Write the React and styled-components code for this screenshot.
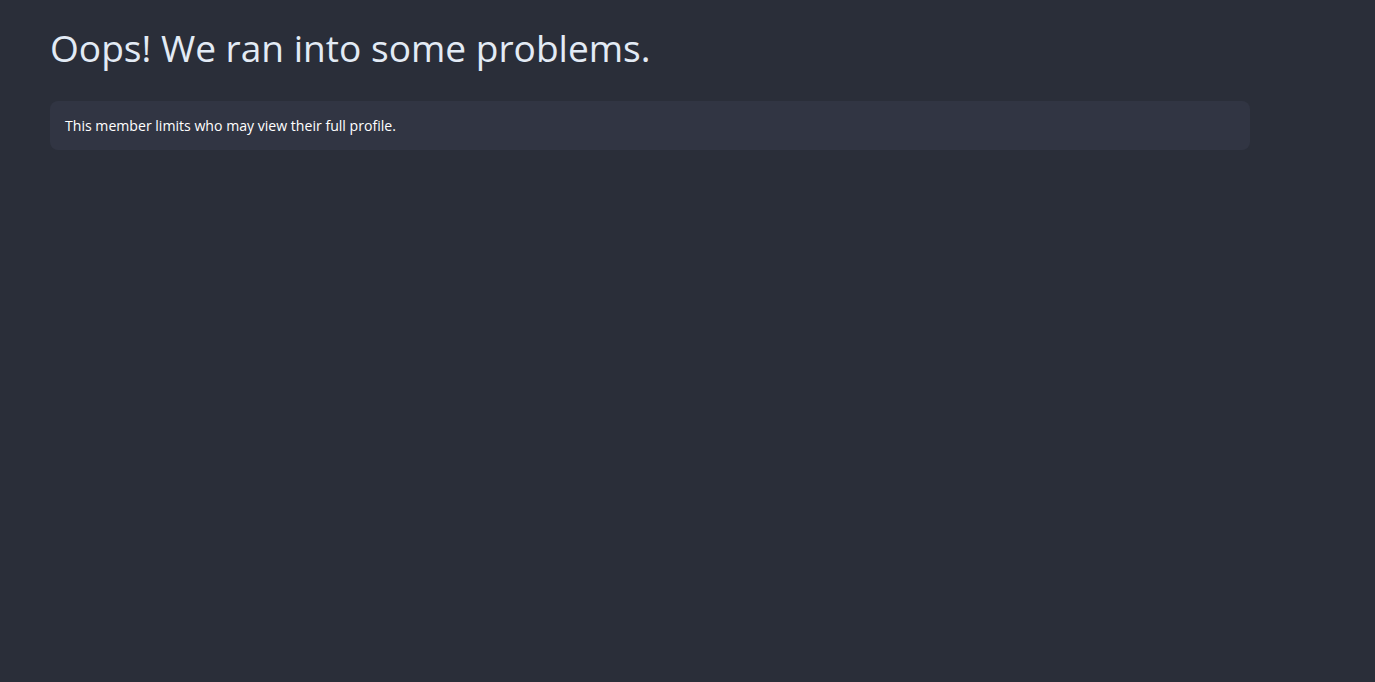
import React from "react";
import styled, { createGlobalStyle } from "styled-components";

const GlobalStyle = createGlobalStyle`
  html, body {
    margin: 0;
    padding: 0;
    background: #2a2e39;
    font-family: "Open Sans", "Noto Sans", sans-serif;
    color: #e6ebf2;
  }
`;

const Page = styled.div`
  padding: 20px 50px;
  min-height: 100vh;
  box-sizing: border-box;
`;

const Content = styled.div`
  max-width: 1200px;
`;

const Title = styled.h1`
  margin: 4px 0 29px;
  font-size: 37.1px;
  font-weight: 400;
  line-height: 48px;
  color: #e3ebf5;
`;

const Notice = styled.div`
  background: #313543;
  border-radius: 8px;
  padding: 15px 15px;
  font-size: 14.1px;
  line-height: 19px;
  color: #ffffff;
`;

export default function App() {
  return (
    <>
      <GlobalStyle />
      <Page>
        <Content>
          <Title>Oops! We ran into some problems.</Title>
          <Notice>This member limits who may view their full profile.</Notice>
        </Content>
      </Page>
    </>
  );
}
